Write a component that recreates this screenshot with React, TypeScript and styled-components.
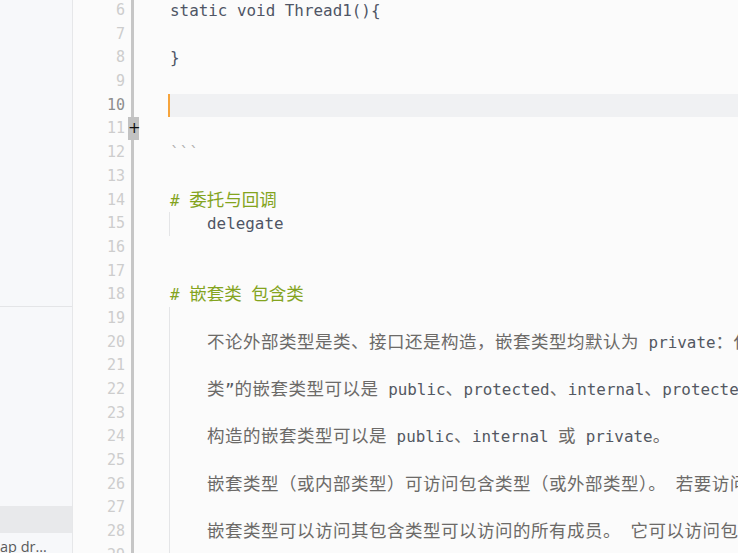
import React from "react";
import styled, { createGlobalStyle, css } from "styled-components";

const Global = createGlobalStyle`
  html, body { margin: 0; padding: 0; overflow: hidden; background: #fbfbfb; }
  #root { width: 738px; height: 553px; }
`;

const LINE_H = 23.69;

const Page = styled.div`
  display: flex;
  width: 738px;
  height: 553px;
  overflow: hidden;
  background: #fbfbfb;
`;

const Sidebar = styled.aside`
  width: 72px;
  flex: none;
  display: flex;
  flex-direction: column;
  background: #f7f8fa;
  border-right: 1px solid #e6e7e9;
  overflow: hidden;
`;

const SidebarTop = styled.div`
  height: 306px;
  flex: none;
  border-bottom: 1px solid #e4e5e7;
`;

const SidebarBottom = styled.div`
  flex: 1;
  display: flex;
  flex-direction: column;
  justify-content: flex-end;
`;

const FileRow = styled.div<{ $active?: boolean }>`
  height: ${(p) => (p.$active ? "27px" : "20px")};
  flex: none;
  background: ${(p) => (p.$active ? "#e8e9eb" : "transparent")};
  font-family: "Open Sans", "Noto Sans", sans-serif;
  font-size: 14.5px;
  line-height: 27px;
  color: #5a5a5a;
  white-space: nowrap;
  overflow: hidden;
`;

const Editor = styled.main`
  flex: 1;
  overflow: hidden;
  background: #fbfbfb;
`;

const Lines = styled.div`
  margin-top: -1px;
  display: flex;
  flex-direction: column;
`;

const Line = styled.div`
  display: flex;
  height: ${LINE_H}px;
  flex: none;
`;

const LineNo = styled.div<{ $active?: boolean }>`
  width: 58px;
  flex: none;
  box-sizing: border-box;
  padding-right: 6px;
  text-align: right;
  font-family: "DejaVu Sans Mono", monospace;
  font-size: 15px;
  line-height: ${LINE_H}px;
  color: ${(p) => (p.$active ? "#8e8e8e" : "#cdcdcd")};
`;

const GutterBar = styled.div`
  width: 3px;
  flex: none;
  background: #c6c6c6;
  position: relative;
`;

const FoldMarker = styled.span`
  position: absolute;
  left: -3px;
  top: 0px;
  width: 11px;
  height: 23px;
  background: #c2c2c2;
  color: #111;
  font-family: "DejaVu Sans", sans-serif;
  font-size: 15px;
  line-height: 23px;
  text-align: center;
`;

const Content = styled.div`
  flex: 1;
  min-width: 0;
  display: flex;
  padding-left: 36px;
  font-family: "DejaVu Sans Mono", monospace;
  font-size: 15.9px;
  line-height: ${LINE_H}px;
  color: #4f5565;
  white-space: pre;
  overflow: hidden;
`;

const CurrentLine = styled.div`
  flex: 1;
  margin-left: -2px;
  border-left: 2px solid #f6a43c;
  background: #f0f1f3;
`;

const Quote = styled.div`
  flex: 1;
  margin-left: -1px;
  border-left: 1px solid #e4e5e7;
  padding-left: 37px;
  white-space: pre;
`;

const Fence = styled.span`
  color: #b0b0b0;
`;

const Heading = styled.span`
  color: #84a41e;
`;

const Para = styled.span`
  color: #6c6a68;
`;

const Cjk = styled.span<{ $heading?: boolean }>`
  font-family: "Noto Sans CJK SC", sans-serif;
  font-size: 17.5px;
  line-height: 1;
  letter-spacing: 0.5px;
  ${(p) =>
    p.$heading &&
    css`
      color: #84a41e;
      letter-spacing: 0;
    `}
`;

const Word = styled.span`
  color: #535862;
`;

type Seg = { t: string; cjk?: boolean };

const P = ({ segs }: { segs: Seg[] }) => (
  <Para>
    {segs.map((s, i) =>
      s.cjk ? <Cjk key={i}>{s.t}</Cjk> : <Word key={i}>{s.t}</Word>
    )}
  </Para>
);

const c = (t: string): Seg => ({ t, cjk: true });
const w = (t: string): Seg => ({ t });

type Row = {
  n: number;
  body?: React.ReactNode;
  quote?: boolean;
  current?: boolean;
  fold?: boolean;
};

const rows: Row[] = [
  { n: 6, body: "static void Thread1(){" },
  { n: 7 },
  { n: 8, body: "}" },
  { n: 9 },
  { n: 10, current: true },
  { n: 11, fold: true },
  { n: 12, body: <Fence>```</Fence> },
  { n: 13 },
  {
    n: 14,
    body: (
      <Heading>
        # <Cjk $heading>委托与回调</Cjk>
      </Heading>
    ),
  },
  { n: 15, quote: true, body: "delegate" },
  { n: 16 },
  { n: 17 },
  {
    n: 18,
    body: (
      <Heading>
        # <Cjk $heading>嵌套类</Cjk> <Cjk $heading>包含类</Cjk>
      </Heading>
    ),
  },
  { n: 19, quote: true },
  {
    n: 20,
    quote: true,
    body: (
      <P
        segs={[
          c("不论外部类型是类、接口还是构造，嵌套类型均默认为"),
          w(" private"),
          c("：仅可从其包含类型中进行访问。"),
        ]}
      />
    ),
  },
  { n: 21, quote: true },
  {
    n: 22,
    quote: true,
    body: (
      <P
        segs={[
          c("类"),
          w("”"),
          c("的嵌套类型可以是"),
          w(" public"),
          c("、"),
          w("protected"),
          c("、"),
          w("internal"),
          c("、"),
          w("protected internal"),
          c("、"),
          w("private"),
        ]}
      />
    ),
  },
  { n: 23, quote: true },
  {
    n: 24,
    quote: true,
    body: (
      <P
        segs={[
          c("构造的嵌套类型可以是"),
          w(" public"),
          c("、"),
          w("internal "),
          c("或"),
          w(" private"),
          c("。"),
        ]}
      />
    ),
  },
  { n: 25, quote: true },
  {
    n: 26,
    quote: true,
    body: (
      <P
        segs={[
          c("嵌套类型（或内部类型）可访问包含类型（或外部类型）。"),
          w(" "),
          c("若要访问包含类型，请将其作为参数传递给嵌套类型的构造函数。"),
        ]}
      />
    ),
  },
  { n: 27, quote: true },
  {
    n: 28,
    quote: true,
    body: (
      <P
        segs={[
          c("嵌套类型可以访问其包含类型可以访问的所有成员。"),
          w(" "),
          c("它可以访问包含类型的私有成员和受保护成员。"),
        ]}
      />
    ),
  },
  { n: 29, quote: true },
];

export default function App() {
  return (
    <>
      <Global />
      <Page>
        <Sidebar>
          <SidebarTop />
          <SidebarBottom>
            <FileRow $active />
            <FileRow>ap dr…</FileRow>
          </SidebarBottom>
        </Sidebar>
        <Editor>
          <Lines>
            {rows.map((r) => (
              <Line key={r.n}>
                <LineNo $active={r.current}>{r.n}</LineNo>
                <GutterBar>{r.fold && <FoldMarker>+</FoldMarker>}</GutterBar>
                <Content>
                  {r.current ? (
                    <CurrentLine />
                  ) : r.quote ? (
                    <Quote>{r.body}</Quote>
                  ) : (
                    r.body
                  )}
                </Content>
              </Line>
            ))}
          </Lines>
        </Editor>
      </Page>
    </>
  );
}
